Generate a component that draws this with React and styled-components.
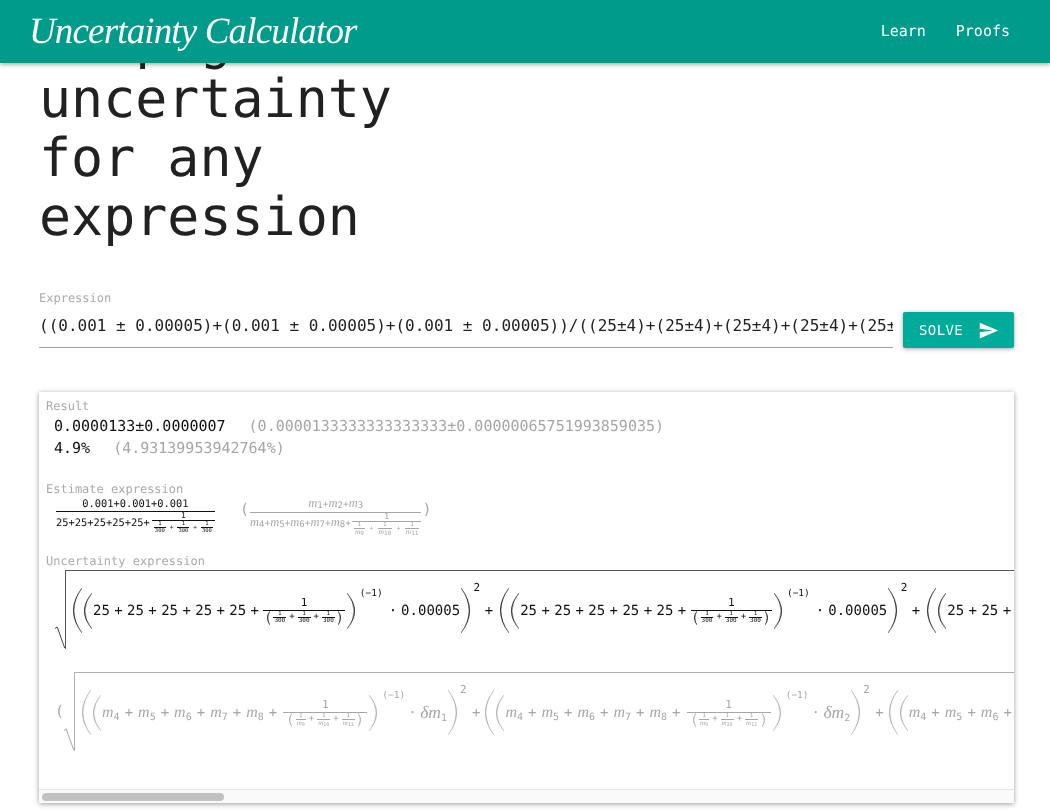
import React from 'react'
import styled, { createGlobalStyle } from 'styled-components'

const MONO = `"DejaVu Sans Mono", "Liberation Mono", monospace`
const SERIF = `"Liberation Serif", serif`

const GlobalStyle = createGlobalStyle`
  html, body {
    margin: 0;
    padding: 0;
    background: #fff;
    overflow: hidden;
  }
  body {
    font-family: ${MONO};
    color: #212121;
    text-rendering: geometricPrecision;
  }
`

const Page = styled.div`
  width: 1050px;
  height: 811px;
  overflow: hidden;
  will-change: transform;
`

const Nav = styled.header`
  position: relative;
  z-index: 2;
  display: flex;
  align-items: center;
  justify-content: space-between;
  height: 63px;
  padding: 0 40px 0 29px;
  box-sizing: border-box;
  background: #009b8a;
  box-shadow: 0 2px 4px rgba(0, 0, 0, 0.3);
`

const Brand = styled.div`
  font-family: ${SERIF};
  font-style: italic;
  font-size: 37px;
  line-height: 63px;
  letter-spacing: -0.85px;
  color: #fff;
  white-space: nowrap;
`

const NavLinks = styled.nav`
  display: flex;
  gap: 30px;
  padding-bottom: 2px;
`

const NavLink = styled.a`
  font-size: 15px;
  color: #fff;
  text-decoration: none;
`

const Main = styled.main`
  padding: 0 36px 0 39px;
`

const Heading = styled.h1`
  max-width: 400px;
  margin: -52px 0 0;
  font-size: 53.3px;
  font-weight: 400;
  line-height: 59px;
  color: #212121;
`

const Form = styled.form`
  display: flex;
  align-items: flex-end;
  gap: 10px;
  margin-top: 43px;
`

const Field = styled.label`
  flex: 1;
  min-width: 0;
  display: block;
`

const FieldLabel = styled.span`
  display: block;
  font-size: 12px;
  line-height: 16px;
  color: #aaa;
`

const Input = styled.input`
  display: block;
  width: 100%;
  height: 42px;
  box-sizing: border-box;
  padding: 0 0 3px;
  border: 0;
  border-bottom: 1px solid #9e9e9e;
  outline: none;
  background: transparent;
  font-family: ${MONO};
  font-size: 16px;
  color: #212121;
`

const SolveButton = styled.button`
  display: flex;
  align-items: center;
  justify-content: space-between;
  width: 111px;
  height: 36px;
  box-sizing: border-box;
  padding: 0 15px 0 16px;
  border: 0;
  border-radius: 2px;
  background: #00ab9a;
  color: #fff;
  font-family: ${MONO};
  font-size: 14px;
  letter-spacing: 0.4px;
  box-shadow: 0 1px 4px rgba(0, 0, 0, 0.35);
`

const Panel = styled.section`
  display: flex;
  flex-direction: column;
  margin-top: 44px;
  width: 975px;
  height: 411px;
  background: #fff;
  box-shadow: 0 1px 5px rgba(0, 0, 0, 0.4);
`

const Scroll = styled.div`
  flex: 1;
  min-height: 0;
  box-sizing: border-box;
  padding-top: 6px;
  overflow: hidden;
`

const ScrollTrack = styled.div`
  flex: none;
  height: 14px;
  box-sizing: border-box;
  padding: 3px;
  background: #fafafa;
  border-top: 1px solid #e8e8e8;
`

const ScrollThumb = styled.div`
  width: 182px;
  height: 8px;
  border-radius: 4px;
  background: #c1c1c1;
`

const SectionLabel = styled.div`
  width: max-content;
  margin: ${(p) => p.$gap || 0}px 0 ${(p) => p.$after || 0}px 7px;
  font-size: 12px;
  line-height: 16px;
  color: #aaa;
`

const ResultLine = styled.div`
  display: flex;
  gap: 23px;
  padding-left: 15px;
  font-size: 15px;
  line-height: 22px;
  white-space: nowrap;
  color: #111;
`

const Muted = styled.span`
  color: #a6a6a6;
`

const EstimateRow = styled.div`
  display: flex;
  align-items: flex-start;
  height: 35px;
  padding-left: 17px;
  color: #111;
`

const EstimateGhost = styled.div`
  display: flex;
  align-items: flex-start;
  margin-left: 24px;
  color: #a6a6a6;
  font-size: 12px;
`

const GhostParen = styled.span`
  font-size: 15px;
  line-height: 22px;
  margin: 0 1px;
`

const SqrtBlock = styled.div`
  display: flex;
  align-items: flex-start;
  width: max-content;
  margin-top: ${(p) => p.$gap || 0}px;
  padding-left: 16px;
  color: ${(p) => (p.$ghost ? '#a6a6a6' : '#111')};
`

const OpenParen = styled.span`
  align-self: flex-start;
  margin: 29px 0 0 0;
  font-size: 15px;
  line-height: 20px;
`

const Radical = styled.svg`
  flex: none;
  display: block;
  width: 10px;
  height: 79px;
`

const SqrtBody = styled.div`
  display: flex;
  align-items: center;
  height: 79px;
  box-sizing: border-box;
  padding: 17px 17px 16px 6px;
  border-top: 1px solid ${(p) => (p.$ghost ? '#b0b0b0' : '#555')};
  border-left: 1px solid ${(p) => (p.$ghost ? '#b0b0b0' : '#555')};
  font-size: 14px;
  white-space: nowrap;
`

const Term = styled.div`
  display: flex;
  align-items: center;
  flex: none;
  height: 45px;
`

const Op = styled.span`
  margin: 0 ${(p) => p.$right ?? p.$space ?? 4.4}px 0 ${(p) => p.$left ?? p.$space ?? 4.4}px;
  font-size: ${(p) => (p.$size ? `${p.$size}px` : 'inherit')};
`

const ParenSvg = styled.svg`
  flex: none;
  display: block;
  width: ${(p) => p.$w}px;
  height: ${(p) => p.$h}px;
  margin: 0 ${(p) => p.$gap ?? 1}px;
`

const Sup = styled.span`
  align-self: flex-start;
  margin: ${(p) => p.$top}px 0 0 ${(p) => p.$left}px;
  font-size: ${(p) => p.$size}px;
  line-height: 12px;
`

const Dot = styled.span`
  margin: 0 ${(p) => p.$right}px 0 ${(p) => p.$left}px;
`

const Frac = styled.span`
  display: inline-flex;
  flex: none;
  flex-direction: column;
  align-items: stretch;
  margin-left: ${(p) => p.$left || 0}px;
  font-size: ${(p) => p.$size}px;
  line-height: ${(p) => p.$line}px;
  vertical-align: middle;
`

const FracTop = styled.span`
  display: block;
  padding: 0 ${(p) => p.$pad ?? 0}px;
  text-align: center;
  border-bottom: 1px solid currentColor;
`

const FracBottom = styled.span`
  display: flex;
  align-items: center;
  justify-content: center;
  padding: 0 ${(p) => p.$pad ?? 0}px;
`

const Name = styled.span`
  font-family: ${SERIF};
  font-style: italic;
  font-size: ${(p) => p.$size}px;
`

const Sub = styled.span`
  font-size: ${(p) => p.$size}px;
  position: relative;
  top: ${(p) => p.$drop}px;
`

const Paren = ({ h, w = 8, right, gap }) => {
  const x = right ? 0 : w
  const cx = right ? w * 2 - 0.5 : -w + 0.5
  const cx2 = right ? w * 2 - 2 : -w + 2
  return (
    <ParenSvg $w={w} $h={h} $gap={gap} viewBox={`0 0 ${w} ${h}`}>
      <path d={`M${x} 0Q${cx} ${h / 2} ${x} ${h}Q${cx2} ${h / 2} ${x} 0Z`} fill="currentColor" stroke="currentColor" strokeWidth="0.35" />
    </ParenSvg>
  )
}

const Root = ({ ghost }) => (
  <Radical viewBox="0 0 10 79">
    <path d="M0 58.5L2.2 57L9.7 78" fill="none" stroke={ghost ? '#a6a6a6' : '#444'} strokeWidth="1" />
  </Radical>
)

const Var = ({ n, size, subSize, drop }) => (
  <span>
    <Name $size={size}>m</Name>
    <Sub $size={subSize} $drop={drop}>{n}</Sub>
  </span>
)

const SendIcon = () => (
  <svg width="21" height="21" viewBox="0 0 24 24" fill="#fff">
    <path d="M2.01 21 23 12 2.01 3 2 10l15 2-15 2z" />
  </svg>
)

const TinyUnit = ({ children, size, line }) => (
  <Frac $size={size} $line={line}>
    <FracTop $pad={1}>1</FracTop>
    <FracBottom $pad={1}>{children}</FracBottom>
  </Frac>
)

const NestedFrac = ({ items, size, line, tiny, tinyLine, parens, plus, plusSize, left, pad = 0 }) => (
  <Frac $size={size} $line={line} $left={left}>
    <FracTop>1</FracTop>
    <FracBottom $pad={parens ? pad : 2}>
      {parens && <Paren h={14} w={3} gap={3.5} />}
      {items.map((item, i) => (
        <React.Fragment key={i}>
          {i > 0 && <Op $space={plus} $size={plusSize}>+</Op>}
          <TinyUnit size={tiny} line={tinyLine}>{item}</TinyUnit>
        </React.Fragment>
      ))}
      {parens && <Paren h={14} w={3} right gap={3.5} />}
    </FracBottom>
  </Frac>
)

const NumericTerm = ({ delta, last }) => (
  <Term>
    <Paren h={45} w={9} gap={1} />
    <Paren h={36} w={8} gap={1} />
    {[0, 1, 2, 3, 4].map((i) => (
      <React.Fragment key={i}>
        25<Op>+</Op>
      </React.Fragment>
    ))}
    <NestedFrac items={['300', '300', '300']} size={11} line={13.5} tiny={6} tinyLine={6} plus={3} plusSize={9} parens />
    <Paren h={36} w={8} right gap={2} />
    <Sup $size={9.5} $top={0} $left={3}>(−1)</Sup>
    <Dot $left={6} $right={4}>·</Dot>
    {delta}
    <Paren h={45} w={9} right gap={1} />
    <Sup $size={11} $top={-6} $left={2.5}>2</Sup>
    {!last && <Op $left={4.4} $right={6.1}>+</Op>}
  </Term>
)

const SymbolicTerm = ({ index, last }) => (
  <Term>
    <Paren h={45} w={9} gap={1} />
    <Paren h={36} w={8} gap={1} />
    {[4, 5, 6, 7, 8].map((n) => (
      <React.Fragment key={n}>
        <Var n={n} size={16} subSize={10} drop={3} /><Op $space={5}>+</Op>
      </React.Fragment>
    ))}
    <NestedFrac
      items={[
        <Var n={9} size={7} subSize={5} drop={1} />,
        <Var n={10} size={7} subSize={5} drop={1} />,
        <Var n={11} size={7} subSize={5} drop={1} />,
      ]}
      size={11}
      line={13.5}
      tiny={6}
      tinyLine={6}
      plus={3}
      plusSize={9}
      parens
      pad={2.5}
      left={1}
    />
    <Paren h={36} w={8} right gap={2} />
    <Sup $size={9.5} $top={0} $left={3}>(−1)</Sup>
    <Dot $left={3} $right={3.5}>·</Dot>
    <span>
      <Name $size={17.5}>δm</Name>
      <Sub $size={10} $drop={3}>{index}</Sub>
    </span>
    <Paren h={45} w={9} right gap={1} />
    <Sup $size={11} $top={-6} $left={2}>2</Sup>
    {!last && <Op $left={5.4} $right={4}>+</Op>}
  </Term>
)

const deltas = ['0.00005', '0.00005', '0.00005', '4', '4', '4', '4', '4', '0.00005', '0.00005', '0.00005']

const App = () => (
  <Page>
    <GlobalStyle />
    <Nav>
      <Brand>Uncertainty Calculator</Brand>
      <NavLinks>
        <NavLink href="#learn">Learn</NavLink>
        <NavLink href="#proofs">Proofs</NavLink>
      </NavLinks>
    </Nav>
    <Main>
      <Heading>Propagate uncertainty for any expression</Heading>
      <Form onSubmit={(e) => e.preventDefault()}>
        <Field>
          <FieldLabel>Expression</FieldLabel>
          <Input
            readOnly
            value="((0.001 ± 0.00005)+(0.001 ± 0.00005)+(0.001 ± 0.00005))/((25±4)+(25±4)+(25±4)+(25±4)+(25±4)+1/(1/(300±1)+1/(300±1)+1/(300±1)))"
          />
        </Field>
        <SolveButton type="submit">
          SOLVE
          <SendIcon />
        </SolveButton>
      </Form>
      <Panel>
        <Scroll>
          <SectionLabel $after={1}>Result</SectionLabel>
          <ResultLine>
            <span>0.0000133±0.0000007</span>
            <Muted>(0.0000133333333333333±0.00000065751993859035)</Muted>
          </ResultLine>
          <ResultLine>
            <span>4.9%</span>
            <Muted>(4.93139953942764%)</Muted>
          </ResultLine>

          <SectionLabel $gap={22} $after={1}>Estimate expression</SectionLabel>
          <EstimateRow>
            <Frac $size={10.4} $line={13}>
              <FracTop>0.001+0.001+0.001</FracTop>
              <FracBottom>
                25+25+25+25+25+
                <NestedFrac items={['300', '300', '300']} size={8} line={8} tiny={5.5} tinyLine={6} plus={4} plusSize={6} left={2} />
              </FracBottom>
            </Frac>
            <EstimateGhost>
              <GhostParen>(</GhostParen>
              <Frac $size={9.5} $line={11.5}>
                <FracTop>
                  <Var n={1} size={12.5} subSize={9} drop={1} />+<Var n={2} size={12.5} subSize={9} drop={1} />+<Var n={3} size={12.5} subSize={9} drop={1} />
                </FracTop>
                <FracBottom>
                  <Var n={4} size={12.5} subSize={9} drop={1} />+<Var n={5} size={12.5} subSize={9} drop={1} />+<Var n={6} size={12.5} subSize={9} drop={1} />+<Var n={7} size={12.5} subSize={9} drop={1} />+<Var n={8} size={12.5} subSize={9} drop={1} />+
                  <NestedFrac
                    items={[
                      <Var n={9} size={7.5} subSize={6} drop={1} />,
                      <Var n={10} size={7.5} subSize={6} drop={1} />,
                      <Var n={11} size={7.5} subSize={6} drop={1} />,
                    ]}
                    size={8}
                    line={8}
                    tiny={6}
                    tinyLine={6}
                    plus={4.5}
                    plusSize={6}
                    left={1}
                  />
                </FracBottom>
              </Frac>
              <GhostParen>)</GhostParen>
            </EstimateGhost>
          </EstimateRow>

          <SectionLabel $gap={20} $after={1}>Uncertainty expression</SectionLabel>
          <SqrtBlock>
            <Root />
            <SqrtBody>
              {deltas.map((delta, i) => (
                <NumericTerm key={i} delta={delta} last={i === deltas.length - 1} />
              ))}
            </SqrtBody>
          </SqrtBlock>
          <SqrtBlock $ghost $gap={23}>
            <OpenParen>(</OpenParen>
            <Root ghost />
            <SqrtBody $ghost>
              {deltas.map((_, i) => (
                <SymbolicTerm key={i} index={i + 1} last={i === deltas.length - 1} />
              ))}
            </SqrtBody>
          </SqrtBlock>
        </Scroll>
        <ScrollTrack>
          <ScrollThumb />
        </ScrollTrack>
      </Panel>
    </Main>
  </Page>
)

export default App
